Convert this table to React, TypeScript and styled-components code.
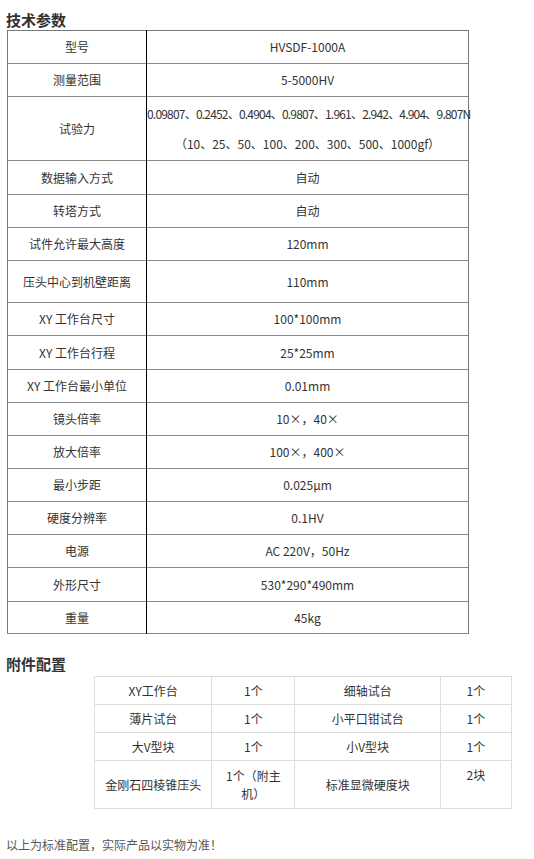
import styled, { createGlobalStyle } from "styled-components";

const GlobalStyle = createGlobalStyle`
  body {
    margin: 0;
    background: #fff;
    font-family: "Noto Sans CJK SC", "Noto Sans", sans-serif;
    color: #333;
  }
`;

const Page = styled.div`
  width: 534px;
  padding: 9px 0 0 6px;
  box-sizing: border-box;
`;

const Heading = styled.h3`
  margin: 0;
  font-size: 15px;
  line-height: 21px;
  font-weight: bold;
  color: #333;
`;

const SpecTable = styled.table`
  margin: 0 0 0 1px;
  width: 462px;
  border-collapse: collapse;
  table-layout: fixed;
  border: 1px solid #777;
  font-size: 12px;
  line-height: 16px;
  color: #333;
`;

const SpecRow = styled.tr<{ $h?: number }>`
  height: ${(p) => p.$h ?? 33}px;
  border-bottom: 1px solid #888;
`;

const KeyCell = styled.td`
  width: 138px;
  border-right: 1px solid #000;
  text-align: center;
  vertical-align: middle;
  padding: 0;
`;

const ValCell = styled.td`
  text-align: center;
  vertical-align: middle;
  padding: 0;
  white-space: nowrap;
  overflow: visible;
`;

const ForceLine = styled.div<{ $tight?: boolean }>`
  line-height: 30px;
  letter-spacing: ${(p) => (p.$tight ? "-0.8px" : "0")};
`;

const SubHeading = styled(Heading)`
  margin-top: 19px;
`;

const PartsTable = styled.table`
  margin: 2px 0 0 88px;
  width: 418px;
  border-collapse: collapse;
  table-layout: fixed;
  font-size: 12px;
  color: #333;
  td {
    border: 1px solid #ddd;
    text-align: center;
    vertical-align: middle;
    padding: 0 4px;
    line-height: 18px;
  }
`;

const PartsRow = styled.tr<{ $h?: number }>`
  height: ${(p) => p.$h ?? 28}px;
`;

const WrapCell = styled.td`
  && {
    padding: 0 12px;
  }
`;

const TopCell = styled.td`
  && {
    vertical-align: top;
    padding-top: 5px;
  }
`;

const Note = styled.p`
  margin: 27px 0 0;
  font-size: 12px;
  line-height: 18px;
  color: #555;
`;

const specs: [string, string, number?][] = [
  ["型号", "HVSDF-1000A"],
  ["测量范围", "5-5000HV"],
  ["试验力", "", 64],
  ["数据输入方式", "自动", 34],
  ["转塔方式", "自动"],
  ["试件允许最大高度", "120mm"],
  ["压头中心到机壁距离", "110mm", 42],
  ["XY 工作台尺寸", "100*100mm"],
  ["XY 工作台行程", "25*25mm", 34],
  ["XY 工作台最小单位", "0.01mm"],
  ["镜头倍率", "10×，40×"],
  ["放大倍率", "100×，400×"],
  ["最小步距", "0.025μm"],
  ["硬度分辨率", "0.1HV"],
  ["电源", "AC 220V，50Hz"],
  ["外形尺寸", "530*290*490mm", 34],
  ["重量", "45kg", 32],
];

const parts: [string, string, string, string][] = [
  ["XY工作台", "1个", "细轴试台", "1个"],
  ["薄片试台", "1个", "小平口钳试台", "1个"],
  ["大V型块", "1个", "小V型块", "1个"],
];

export default function App() {
  return (
    <Page>
      <GlobalStyle />
      <Heading>技术参数</Heading>
      <SpecTable>
        <tbody>
          {specs.map(([k, v, h]) => (
            <SpecRow key={k} $h={h}>
              <KeyCell>{k}</KeyCell>
              {k === "试验力" ? (
                <ValCell>
                  <ForceLine $tight>
                    0.09807、0.2452、0.4904、0.9807、1.961、2.942、4.904、9.807N
                  </ForceLine>
                  <ForceLine>（10、25、50、100、200、300、500、1000gf）</ForceLine>
                </ValCell>
              ) : (
                <ValCell>{v}</ValCell>
              )}
            </SpecRow>
          ))}
        </tbody>
      </SpecTable>

      <SubHeading>附件配置</SubHeading>
      <PartsTable>
        <colgroup>
          <col style={{ width: 117 }} />
          <col style={{ width: 83 }} />
          <col style={{ width: 145 }} />
          <col style={{ width: 71 }} />
        </colgroup>
        <tbody>
          {parts.map((r) => (
            <PartsRow key={r[0]}>
              {r.map((c, i) => (
                <td key={i}>{c}</td>
              ))}
            </PartsRow>
          ))}
          <PartsRow $h={48}>
            <td>金刚石四棱锥压头</td>
            <WrapCell>1个（附主机）</WrapCell>
            <td>标准显微硬度块</td>
            <TopCell>2块</TopCell>
          </PartsRow>
        </tbody>
      </PartsTable>
      <Note>以上为标准配置，实际产品以实物为准！</Note>
    </Page>
  );
}
